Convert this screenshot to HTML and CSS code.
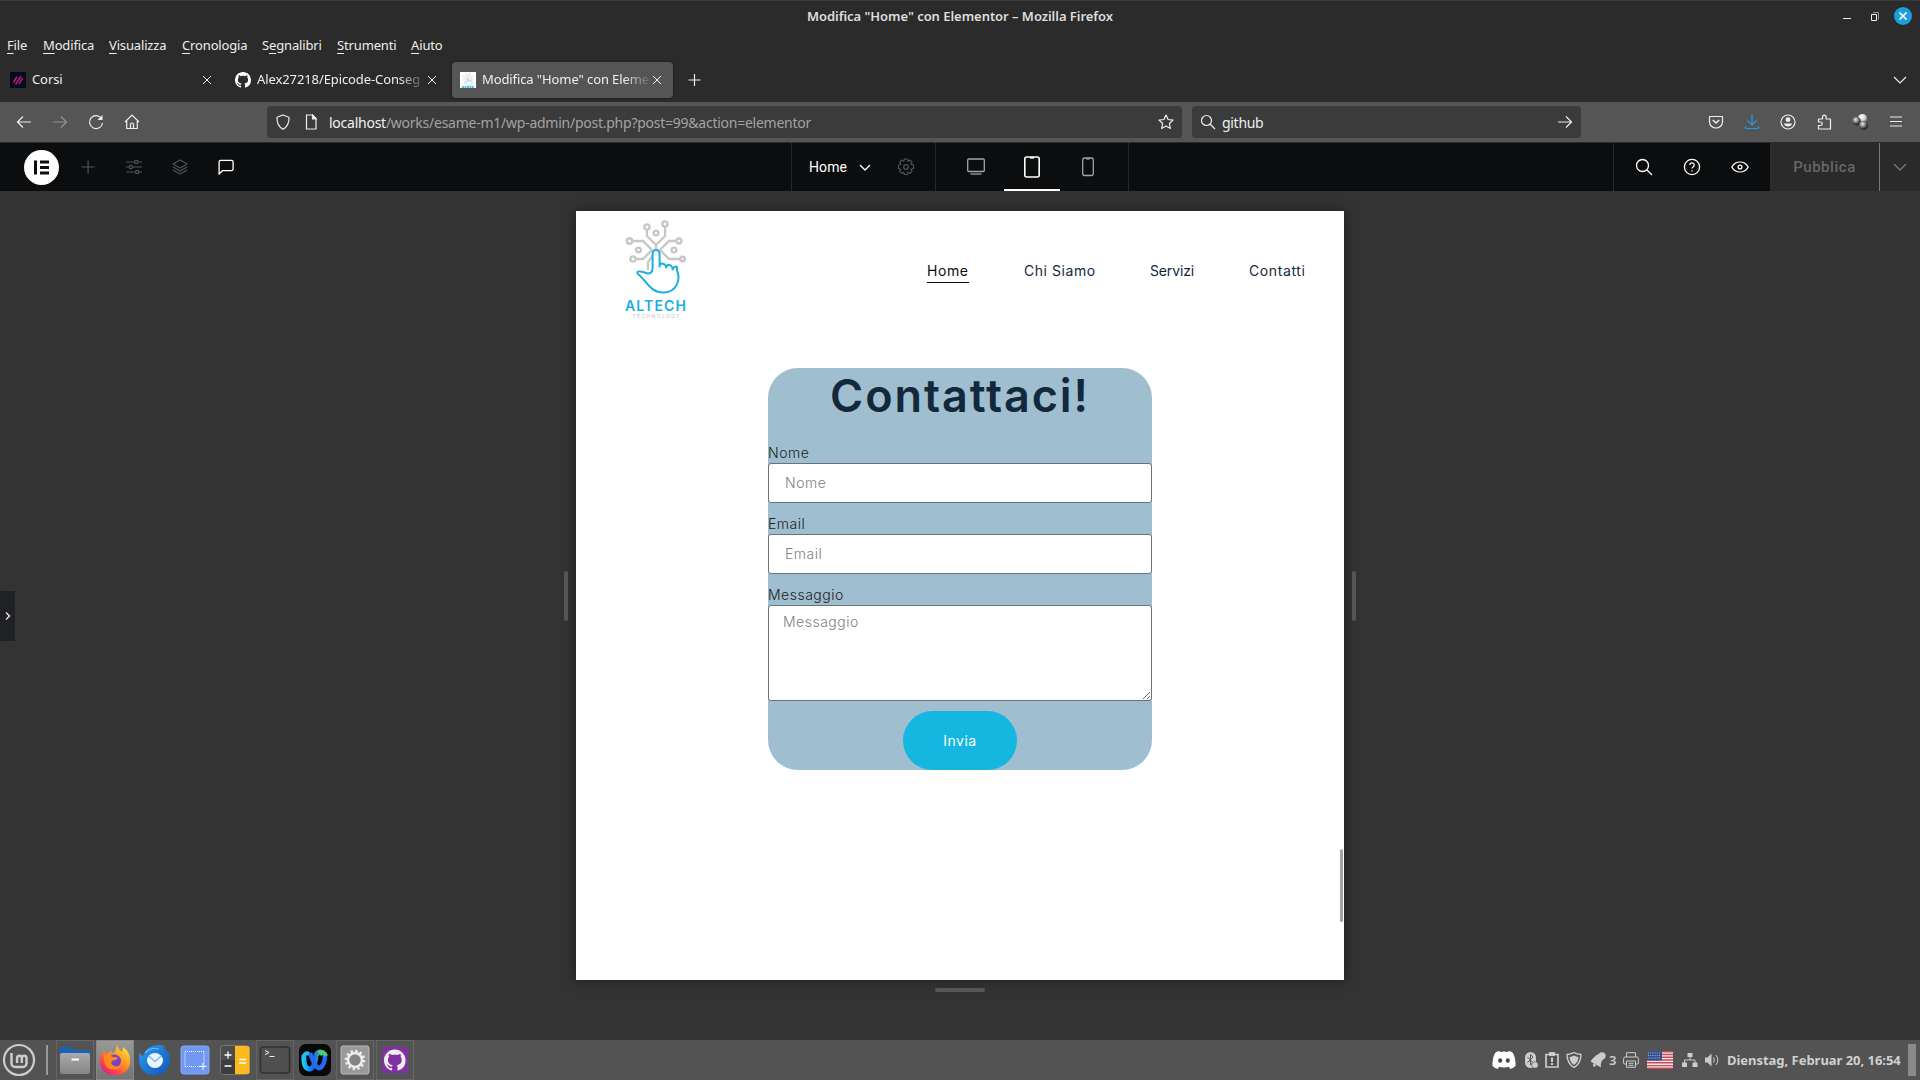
FILE: index.html
```html
<!DOCTYPE html>
<html lang="it">
<head>
<meta charset="utf-8">
<title>Modifica "Home" con Elementor</title>
<link rel="stylesheet" href="styles.css">
</head>
<body>
<svg class="defs" width="0" height="0">
  <defs>
    <linearGradient id="gFolder" x1="0" y1="0" x2="0" y2="1"><stop offset="0" stop-color="#aaa"/><stop offset="1" stop-color="#858585"/></linearGradient>
    <linearGradient id="gFox" x1="1" y1="0" x2="0.2" y2="1"><stop offset="0" stop-color="#fff04a"/><stop offset="0.45" stop-color="#ff9a1f"/><stop offset="0.8" stop-color="#ff3d4b"/><stop offset="1" stop-color="#e3159a"/></linearGradient>
    <linearGradient id="gBird" x1="0" y1="0" x2="1" y2="1"><stop offset="0" stop-color="#2a9df5"/><stop offset="1" stop-color="#1354b8"/></linearGradient>
    <linearGradient id="gWebex" x1="0" y1="0" x2="1" y2="0"><stop offset="0" stop-color="#16c8f4"/><stop offset="0.5" stop-color="#2458f0"/><stop offset="1" stop-color="#4fd866"/></linearGradient>
    <radialGradient id="gBall" cx="0.4" cy="0.35" r="0.7"><stop offset="0" stop-color="#eee"/><stop offset="0.4" stop-color="#888"/><stop offset="1" stop-color="#000"/></radialGradient>
    <radialGradient id="gBallLight" cx="0.4" cy="0.35" r="0.7"><stop offset="0" stop-color="#fff"/><stop offset="0.6" stop-color="#ccc"/><stop offset="1" stop-color="#555"/></radialGradient>
    <path id="cat" d="M8 0C3.58 0 0 3.58 0 8c0 3.54 2.29 6.53 5.47 7.59.4.07.55-.17.55-.38 0-.19-.01-.82-.01-1.49-2.01.37-2.53-.49-2.69-.94-.09-.23-.48-.94-.82-1.13-.28-.15-.68-.52-.01-.53.63-.01 1.08.58 1.23.82.72 1.21 1.87.87 2.33.66.07-.52.28-.87.51-1.07-1.78-.2-3.64-.89-3.64-3.95 0-.87.31-1.59.82-2.15-.08-.2-.36-1.02.08-2.12 0 0 .67-.21 2.2.82.64-.18 1.32-.27 2-.27s1.36.09 2 .27c1.53-1.04 2.2-.82 2.2-.82.44 1.1.16 1.92.08 2.12.51.56.82 1.27.82 2.15 0 3.07-1.87 3.75-3.65 3.95.29.25.54.73.54 1.48 0 1.07-.01 1.93-.01 2.2 0 .21.15.46.55.38A8.01 8.01 0 0 0 16 8c0-4.42-3.58-8-8-8z"/>
    <g id="tech">
      <g fill="none" stroke="#c6c8c8" stroke-width="2.300">
        <path d="M31 29V25L22 16V8M31 25L40 16V5M27 30L18 21H7M27 30L18 39H11M35 30L44 21H52M35 30L44 39H55M28 35L23 42V50"/>
      </g>
      <g fill="#fff" stroke="#c6c8c8" stroke-width="2.400">
        <circle cx="22" cy="7" r="2.600"/><circle cx="40" cy="4" r="2.600"/><circle cx="31" cy="13" r="2.400"/><circle cx="4.500" cy="21" r="2.700"/><circle cx="54" cy="21" r="2.500"/><circle cx="13.500" cy="30" r="2.400"/><circle cx="49" cy="30" r="2.400"/><circle cx="8" cy="39" r="2.600"/><circle cx="57.500" cy="39" r="2.300"/>
      </g>
      <path d="M27.600 49V34Q27.600 30 31 30T34.600 34V46.500Q35 42.500 38.500 44T41 47.500Q43 43.500 45.500 45.500T47.500 49.500Q49.500 45.500 52 47V50.500C56 60 51.500 72 39 72.500C25 73 22 61 13 54C10 49.500 19 51.800 22.500 53.500Q26.500 54 27.600 49" fill="#fff" stroke="#18b0dc" stroke-width="2" stroke-linejoin="round"/>
    </g>
  </defs>
</svg>

<header class="chrome">
  <div class="titlebar">
    <span class="title">Modifica "Home" con Elementor – Mozilla Firefox</span>
    <div class="wm">
      <svg width="28" height="20" viewBox="0 0 28 20"><path d="M10 12h8v1h-8z" fill="#eee"/></svg>
      <svg width="28" height="20" viewBox="0 0 28 20"><path d="M10.500 8.500h5v6h-5z" fill="none" stroke="#eee"/><path d="M12 6.500h5.500v7" fill="none" stroke="#999"/></svg>
      <svg width="28" height="20" viewBox="0 0 28 20"><circle cx="14" cy="10" r="9" fill="#1f9ede"/><path d="M10.500 6.500l7 7m0-7l-7 7" stroke="#fff" stroke-width="1.600"/></svg>
    </div>
  </div>
  <nav class="menubar">
    <span class="m1"><u>F</u>ile</span><span class="m2"><u>M</u>odifica</span><span class="m3"><u>V</u>isualizza</span><span class="m4"><u>C</u>ronologia</span><span class="m5">S<u>e</u>gnalibri</span><span class="m6"><u>S</u>trumenti</span><span class="m7"><u>A</u>iuto</span>
  </nav>
  <div class="tabs">
    <div class="tab">
      <svg width="16" height="16" viewBox="0 0 16 16"><path d="M0 0h16v16H0z" fill="#050a20"/><path d="M3.500 10.500L7 4.500M5.500 12.500L11 4M9 12l3.500-6" stroke="#b81b78" stroke-width="1.500"/></svg>
      <span class="label">Corsi</span>
      <svg class="x" width="16" height="16" viewBox="0 0 16 16"><path d="M4 4l8 8m0-8l-8 8"/></svg>
    </div>
    <div class="tab">
      <svg width="16" height="16" viewBox="0 0 16 16"><use href="#cat" fill="#fff"/></svg>
      <span class="label fade">Alex27218/Epicode-Conseg</span>
      <svg class="x" width="16" height="16" viewBox="0 0 16 16"><path d="M4 4l8 8m0-8l-8 8"/></svg>
    </div>
    <div class="tab active">
      <svg width="16" height="16" viewBox="0 0 16 16"><path d="M0 0h16v16H0z" fill="#fff"/><use href="#tech" transform="translate(2 .8) scale(.19 .175)"/><path d="M2 15h12" stroke="#18b0dc" stroke-width="1.300" stroke-dasharray="2 .5"/></svg>
      <span class="label fade">Modifica "Home" con Eleme</span>
      <svg class="x" width="16" height="16" viewBox="0 0 16 16"><path d="M4 4l8 8m0-8l-8 8"/></svg>
    </div>
    <svg class="newtab ln" width="42" height="20" viewBox="0 0 42 20"><path d="M15.500 10h12M21.500 4v12"/></svg>
    <svg class="alltabs ln" width="40" height="20" viewBox="0 0 40 20"><path d="M14 7l6 6 6-6"/></svg>
  </div>
  <div class="navbar">
    <div class="group left">
      <svg class="ln" viewBox="0 0 16 16"><path d="M15 8H1.500M7 2.500L1.500 8 7 13.500"/></svg>
      <svg class="ln dim" viewBox="0 0 16 16"><path d="M1 8h13.500M9 2.500L14.500 8 9 13.500"/></svg>
      <svg class="ln" viewBox="0 0 16 16"><path d="M13.500 4.500A6.500 6.500 0 1 0 14.500 9"/><path d="M14.500 1v5h-5z" fill="#eee" stroke="none"/></svg>
      <svg class="ln" viewBox="0 0 16 16"><path d="M1 8l7-7 7 7M2.700 7v7.500h10.600V7M6.500 14V10.500a1.500 1.500 0 0 1 3 0V14"/></svg>
    </div>
    <div class="field url">
      <svg class="ln" viewBox="0 0 16 16"><path d="M8 1l6 2.300c.3 5.700-1.500 9.500-6 11.900C3.500 12.800 1.700 9 2 3.300z"/></svg>
      <svg class="ln doc" viewBox="0 0 16 16"><path d="M3.500 1h6L13 4.500V15H3.500z"/><path d="M9.500 1v4H13z" fill="#eee"/></svg>
      <span class="addr"><b>localhost</b>/works/esame-m1/wp-admin/post.php?post=99&amp;action=elementor</span>
      <svg class="ln star" viewBox="0 0 16 16"><path d="M8 1l2.100 4.500 4.900.6-3.600 3.400.9 5L8 12.100 3.700 14.500l.9-5L1 6.100l4.900-.6z" stroke-linejoin="round"/></svg>
    </div>
    <div class="field search">
      <svg class="ln" viewBox="0 0 16 16"><circle cx="6.500" cy="6.500" r="5"/><path d="M10 10l5 5"/></svg>
      <span class="q">github</span>
      <svg class="ln" viewBox="0 0 16 16"><path d="M1 8h13.500M9 2.500L14.500 8 9 13.500"/></svg>
    </div>
    <div class="group right">
      <svg class="ln" viewBox="0 0 16 16"><path d="M1.500 2.500h13V8a6.500 6 0 0 1-13 0z" stroke-linejoin="round"/><path d="M4.800 6L8 9l3.200-3" stroke-width="1.600"/></svg>
      <svg class="ln blue" viewBox="0 0 16 16"><path d="M8 0v11M3.500 6.500L8 11l4.500-4.500M1.500 12v2.500h13V12"/></svg>
      <svg class="ln" viewBox="0 0 16 16"><circle cx="8" cy="8" r="7"/><circle cx="8" cy="5.700" r="2.400" fill="#eee" stroke="none"/><path d="M3.800 9.500h8.400a4.500 4.500 0 0 1-8.400 0z" fill="#eee" stroke="none"/></svg>
      <svg class="ln" viewBox="0 0 16 16"><path d="M2.500 15v-3.500h2a1.700 1.700 0 0 0 0-3.500h-2V5h4V3a1.800 1.800 0 0 1 3.600 0v2h4.400v10z" stroke-linejoin="round"/></svg>
      <svg viewBox="0 0 16 16"><circle cx="10.500" cy="4.500" r="4.700" fill="url(#gBallLight)"/><circle cx="4.500" cy="7" r="4.300" fill="url(#gBall)"/><circle cx="11.500" cy="11.300" r="4.500" fill="url(#gBall)"/></svg>
      <svg class="ln" viewBox="0 0 16 16"><path d="M2 3h12M2 7.500h12M2 12h12"/></svg>
    </div>
  </div>
</header>

<div class="editor">
  <div class="e-left">
    <svg width="35" height="35" viewBox="0 0 35 35"><circle cx="17.500" cy="17.500" r="17.500" fill="#fff"/><path d="M10 10.500h3v14h-3zM16 10.500h9v3h-9zM16 16h9v3h-9zM16 21.500h9v3h-9z" fill="#0c0d0e"/></svg>
    <div class="tools">
      <svg class="mut" viewBox="0 0 16 16"><path d="M8 1.500v13M1.500 8h13"/></svg>
      <svg class="mut" viewBox="0 0 16 16"><path d="M0 3h8.500M12 3h4M0 8h3M6.500 8H16M0 13h9.500M13 13h3"/><circle cx="10.200" cy="3" r="1.700"/><circle cx="4.700" cy="8" r="1.700"/><circle cx="11.200" cy="13" r="1.700"/></svg>
      <svg class="mut" viewBox="0 0 16 16"><path d="M8 1l7 4-7 4-7-4zM1 8l7 4 7-4M1 11l7 4 7-4" stroke-linejoin="round"/></svg>
      <svg class="wht" viewBox="0 0 16 16"><path d="M1 15V3a1.700 1.700 0 0 1 1.700-1.700h10.600A1.700 1.700 0 0 1 15 3v7a1.700 1.700 0 0 1-1.700 1.700H4.300z" stroke-linejoin="round"/></svg>
    </div>
  </div>
  <div class="e-doc">
    <span class="docname">Home</span>
    <svg class="wht" width="12" height="12" viewBox="0 0 12 12"><path d="M1 4l5 5 5-5"/></svg>
    <svg class="mut gear" width="18" height="18" viewBox="0 0 18 18"><circle cx="9" cy="9" r="2.300"/><path d="M7.500 1h3l.6 2.200 1.900-1 2 2-1 2L16.500 7v3.500l-2.500.8 1 2-2 2-2-1-.7 2.200h-3l-.6-2.200-2 1-2-2 1-2-2.200-.8V7l2.200-.8-1-2 2-2 2 1z" stroke-linejoin="round"/></svg>
  </div>
  <div class="e-dev">
    <div class="dev"><svg class="gry" width="20" height="20" viewBox="0 0 20 20"><rect x="1.700" y="2" width="16.600" height="12.500" rx="1"/><path d="M4.500 17h11"/></svg></div>
    <div class="dev on"><svg class="wht2" width="20" height="22" viewBox="0 0 20 22"><rect x="2.800" y="1" width="14.400" height="20" rx="2"/><path d="M8 1.800h4"/></svg></div>
    <div class="dev"><svg class="gry" width="16" height="20" viewBox="0 0 16 20"><rect x="2.700" y="1" width="10.600" height="17.500" rx="1.700"/><path d="M6.500 2h3"/></svg></div>
  </div>
  <div class="e-right">
    <svg class="wht" viewBox="0 0 18 18"><circle cx="7.500" cy="7.500" r="6"/><path d="M12 12l5 5"/></svg>
    <svg class="wht" viewBox="0 0 18 18"><circle cx="9" cy="9" r="7.600"/><path d="M6.800 7a2.200 2.200 0 1 1 3.300 2C9.200 9.500 9 9.800 9 10.500M9 12.300v1.300"/></svg>
    <svg class="wht" viewBox="0 0 18 18"><path d="M.8 9C4.500 .8 13.500 .8 17.200 9 13.500 17.200 4.500 17.200.8 9z" transform="translate(0 1.600) scale(1 .82)"/><circle cx="9" cy="9" r="1.900"/></svg>
  </div>
  <div class="publish">Pubblica</div>
  <div class="pubmore"><svg width="14" height="14" viewBox="0 0 14 14"><path d="M1 4l6 6 6-6"/></svg></div>
</div>

<main class="canvas">
  <div class="toggle"><svg width="8" height="10" viewBox="0 0 8 10"><path d="M2 1.500L5.500 5 2 8.500" fill="none" stroke="#ddd" stroke-width="1.500"/></svg></div>
  <i class="handle v"></i>
  <div class="middle">
    <section class="preview">
      <div class="site-head">
        <svg class="logo" width="64" height="104" viewBox="0 0 64 104">
          <use href="#tech"/>
          <text x="0" y="90.500" class="l1" textLength="61">ALTECH</text>
          <text x="7.500" y="98.300" class="l2" textLength="47">TECHNOLOGY</text>
        </svg>
        <nav class="site-nav"><a class="on n1">Home</a><a class="n2">Chi Siamo</a><a class="n3">Servizi</a><a class="n4">Contatti</a></nav>
      </div>
      <form class="form">
        <h2>Contattaci!</h2>
        <label>Nome</label>
        <input type="text" placeholder="Nome">
        <label>Email</label>
        <input type="text" placeholder="Email">
        <label>Messaggio</label>
        <textarea placeholder="Messaggio"></textarea>
        <button type="button">Invia</button>
      </form>
      <i class="thumb"></i>
    </section>
    <i class="handle h"></i>
  </div>
  <i class="handle v"></i>
</main>

<footer class="taskbar">
  <svg class="mint" width="38" height="40" viewBox="0 0 38 40"><circle cx="19" cy="20" r="15" fill="none" stroke="#ccc" stroke-width="2.200"/><path d="M11.500 13v10.500a3.500 3.500 0 0 0 3.500 3.500h8a3.500 3.500 0 0 0 3.500-3.500v-5.500a2.200 2.200 0 0 0-4.700 0v5M21.800 18a2.300 2.300 0 0 0-4.700 0v5" fill="none" stroke="#ccc" stroke-width="2.500"/></svg>
  <i class="sep"></i>
  <div class="apps">
    <div class="app open"><svg viewBox="0 0 32 32"><path d="M1 5q0-2 2-2h8l3 3h15q2 0 2 2v6H1z" fill="#1665b8"/><rect x="1" y="9" width="30" height="21" rx="2" fill="url(#gFolder)"/><path d="M12.500 14.500h7.500v2h-7.500z" fill="#fff"/></svg></div>
    <div class="app open hot"><svg viewBox="0 0 32 32"><path d="M18 1q1 4 5 7q1-3 1-5q8 5 7 16Q29 31 16 31T1 18Q1 11 5 6q.5 3 3 4 2-3 5-3-1 2 0 3 4-2 5-9z" fill="url(#gFox)"/><circle cx="15.500" cy="17" r="6.500" fill="#7542c9"/><path d="M5 11q5-1 9 2l5 .5q-1 3-5 3-3 2-1 4 5 4 9 0 0 4-5 5-10 1-12-8z" fill="#ff8a1c"/></svg></div>
    <div class="app"><svg viewBox="0 0 32 32"><path d="M1 7q0 4 3 5Q8 0 22 1l5 2-3 1q8 4 7 14Q28 31 15 31T0 17q0-6 1-10z" fill="url(#gBird)"/><ellipse cx="16" cy="16.500" rx="8" ry="7.500" fill="#e8f4ff"/><path d="M10 12l6 5.500 6-5.500" fill="none" stroke="#87b8e8" stroke-width="1.300"/><path d="M6 9Q11 3 20 5" fill="none" stroke="#6cc4ff" stroke-width="1.200"/></svg></div>
    <div class="app"><svg viewBox="0 0 32 32"><rect x="2" y="2" width="28" height="28" rx="2.500" fill="#7199f3" stroke="#86a9fa"/><path d="M6 7.500h19v15H6z" fill="none" stroke="#fff" stroke-dasharray="1 1"/><path d="M24 19v7M20.500 22.500h7" stroke="#fff"/></svg></div>
    <div class="app"><svg viewBox="0 0 32 32"><rect x="1.500" y="1.500" width="29" height="29" rx="3" fill="#4d4d4d" stroke="#777"/><path d="M2 16h14v14H4q-2 0-2-2z" fill="#3d3d3d"/><path d="M16 2h12q2.500 0 2.500 2.500v23Q30.500 30 28 30H16z" fill="#ffb91f"/><path d="M5.500 11h7M9 7.500v7M5.500 22h7M20 15.500h7M20 19h7" stroke="#fff" stroke-width="1.300"/></svg></div>
    <div class="app open"><svg viewBox="0 0 32 32"><rect x="1.500" y="3" width="29" height="26" rx="3" fill="#505050" stroke="#303030" stroke-width="1.500"/><path d="M6 6.500l4 2-4 2M10.500 12.500h5" fill="none" stroke="#eee"/></svg></div>
    <div class="app"><svg viewBox="0 0 32 32"><rect width="32" height="32" rx="7" fill="#080808"/><path d="M5 11q-1 14 6 14 5-1 6-14 4-6 7 0" fill="none" stroke="url(#gWebex)" stroke-width="5"/><path d="M11 9q6 17 10 15 5-3 5-13" fill="none" stroke="#246af4" stroke-width="4.500"/><path d="M5 12q1-4 5-2" fill="none" stroke="#20c4e0" stroke-width="4"/><path d="M20 9q5-3 7 3" fill="none" stroke="#48d070" stroke-width="4"/></svg></div>
    <div class="app open"><svg viewBox="0 0 32 32"><rect x="2" y="2" width="28" height="28" rx="2" fill="#999" stroke="#bbb"/><circle cx="16" cy="16" r="9" fill="none" stroke="#eee" stroke-width="2.500" stroke-dasharray="2.350 2.350"/><circle cx="16" cy="16" r="7" fill="#858585" stroke="#eee" stroke-width="2.500"/></svg></div>
    <div class="app open"><svg viewBox="0 0 32 32"><rect x="3" y="3" width="26" height="26" rx="4" fill="#8030a0"/><use href="#cat" fill="#eee" transform="translate(5 5.500) scale(1.350)"/></svg></div>
  </div>
  <div class="tray">
    <svg class="i-dis" width="24" height="18" viewBox="0 0 24 18"><path d="M8 1q4-1 8 0l.5-1Q20 .5 21 2q3 6 2.500 13-3 3-5.500 2.700l-1-2q-5 1.500-10 0l-1 2Q3.500 18 .5 15 0 8 3 2 4 .5 7.500 0z" fill="#fff"/><ellipse cx="8.200" cy="9.500" rx="2" ry="2.300" fill="#444"/><ellipse cx="15.800" cy="9.500" rx="2" ry="2.300" fill="#444"/></svg>
    <svg class="i-bt" width="14" height="16" viewBox="0 0 14 16"><rect x="1" width="11" height="16" rx="5.500" fill="#ccc"/><path d="M3.500 5l5.500 5.500L6.500 13V2.500L9 5l-5.500 5.500" fill="none" stroke="#555"/><circle cx="11" cy="13" r="3.300" fill="#ccc" stroke="#555" stroke-width=".6"/></svg>
    <svg class="i-cl" width="16" height="16" viewBox="0 0 16 16"><path d="M2 2.500h12v12.500H2z" fill="none" stroke="#ccc" stroke-width="1.700"/><path d="M5 0h6v4H5zM7 5.500h2v4.500H7zM7 11h2v2H7z" fill="#ccc"/></svg>
    <svg class="i-sh" width="16" height="16" viewBox="0 0 16 16"><path d="M8 .5q3 2 7 2-.2 9-7 13-6.800-4-7-13 4 0 7-2z" fill="none" stroke="#ccc" stroke-width="1.400"/><path d="M8 3.500q2 1.300 4.500 1.500-.5 5.500-4.500 8-4-2.500-4.500-8Q6 4.800 8 3.500z" fill="#ccc"/></svg>
    <svg class="i-be" width="16" height="16" viewBox="0 0 16 16"><path d="M.5 9.500Q5 3 9 2l4.500 5Q10 10 11 15.500z" fill="#ccc"/><circle cx="12" cy="3.800" r="3.600" fill="#ccc"/><path d="M3 11.500l3.500 1.500-2 2q-2-1-1.500-3.500z" fill="#ccc"/></svg>
    <span class="cnt">3</span>
    <svg class="i-pr" width="16" height="16" viewBox="0 0 16 16"><path d="M3.500 5V.7h9V5M3.500 12H1.700Q.6 12 .6 11V6.500Q.6 5 2 5h12q1.400 0 1.400 1.500V11q0 1-1.100 1h-1.800M3.500 9h9v6.300h-9zM5.500 11.300h5M5.500 13.300h5" fill="none" stroke="#ccc"/></svg>
    <svg class="i-fl" width="26" height="18" viewBox="0 0 26 18"><path d="M0 0h26v18H0z" fill="#eee"/><path d="M0 .7h26M0 3.500h26M0 6.200h26M0 9h26M0 11.800h26M0 14.600h26M0 17.300h26" stroke="#cc4653" stroke-width="1.400"/><path d="M0 0h15v9.500H0z" fill="#38508a"/><path d="M1 2h13M1 4.500h13M1 7h13" stroke="#a9b4d0" stroke-dasharray="1 1.200"/></svg>
    <svg class="i-ne" width="16" height="14" viewBox="0 0 16 14"><path d="M5.500 0h5v4h-5zM0 9.500h5V14H0zM10.500 9.500h5V14h-5z" fill="#ccc"/><path d="M8 4v3M2.500 10V7h10.500v3" fill="none" stroke="#ccc"/></svg>
    <svg class="i-so" width="15" height="14" viewBox="0 0 15 14"><path d="M0 4.500h2.500L6.500.5v13l-4-4H0z" fill="#ccc"/><path d="M8.500 4.500q1.700 2.500 0 5M11 2q3.500 5 0 10" fill="none" stroke="#ccc"/></svg>
    <span class="clock">Dienstag, Februar 20, 16:54</span>
    <i class="desk"></i>
  </div>
</footer>
</body>
</html>
```
FILE: styles.css
```css
* { box-sizing: border-box; }
body { margin: 0; width: 1920px; height: 1080px; overflow: hidden; display: flex; flex-direction: column; background: #333; font-family: "Noto Sans", sans-serif; font-size: 13px; color: #eee; }
svg, span { flex: none; display: block; }
.defs { position: absolute; }
.ln { fill: none; stroke: #eee; stroke-width: 1.2; }

/* Browser window */
.chrome { height: 143px; background: #2b2b2b; border-top: 1px solid #3c3c3c; border-bottom: 1px solid #2b2b2b; display: flex; flex-direction: column; }
.titlebar { height: 30px; display: grid; grid-template-columns: 1fr auto 1fr; align-items: center; }
.title { grid-column: 2; font-weight: 600; color: #dedede; letter-spacing: -.04px; }
.wm { display: flex; justify-content: flex-end; padding-right: 3px; }
.menubar { height: 28px; display: flex; align-items: center; padding-left: 7px; }
.menubar u { text-underline-offset: 3px; }
.menubar span { letter-spacing: -.15px; }
.m1 { width: 36px; } .m2 { width: 66px; } .m3 { width: 73px; } .m4 { width: 80px; } .m5 { width: 75px; } .m6 { width: 74px; }
.tabs { height: 43px; display: flex; align-items: center; gap: 4px; padding: 0 0 2px 2px; }
.tab { width: 221px; height: 36px; display: flex; align-items: center; padding: 0 8px; border-radius: 4px; }
.tab.active { background: #555; box-shadow: 0 0 3px rgba(0,0,0,.5); }
.label { flex: 1; margin-left: 6px; padding-bottom: 1px; white-space: nowrap; letter-spacing: -.1px; }
.fade { -webkit-mask-image: linear-gradient(to right, #000 85%, rgba(0,0,0,.1) 100%); mask-image: linear-gradient(to right, #000 85%, rgba(0,0,0,.1) 100%); }
.x { fill: none; stroke: #eee; }
.newtab { margin-left: -4px; }
.alltabs { margin-left: auto; }
.navbar { height: 40px; background: #555; display: flex; align-items: center; }
.group { display: flex; }
.group svg { width: 36px; height: 16px; }
.left { padding-left: 6px; width: 267px; }
.right { margin-left: auto; padding-right: 6px; }
.dim { opacity: .4; }
.blue { stroke: #1f9ede; }
.field { height: 32px; background: #3b3b3b; border-radius: 4px; display: flex; align-items: center; }
.field svg { width: 16px; height: 16px; }
.url { width: 915px; padding: 0 8px; }
.doc { margin-left: 12px; }
.addr { flex: 1; margin-left: 10px; color: #a3a3a3; font-size: 14px; letter-spacing: -.25px; }
.addr b { font-weight: 400; color: #f2f2f2; }
.search { width: 389px; margin-left: 10px; padding: 0 8px; }
.q { flex: 1; margin-left: 6px; font-size: 14px; letter-spacing: -.3px; }

/* Elementor top bar */
.editor { height: 48px; background: #0c0d0e; display: flex; font-family: Roboto, sans-serif; }
.editor svg { fill: none; }
.e-left { width: 791px; display: flex; align-items: center; padding-left: 24px; }
.tools { display: flex; margin-left: 5.5px; }
.tools svg { width: 46.2px; height: 16px; }
.mut { stroke: #515356; stroke-width: 1.2; }
.wht { stroke: #fff; stroke-width: 1.3; }
.wht2 { stroke: #fff; stroke-width: 1.6; }
.gry { stroke: #9da5ae; stroke-width: 1.3; }
.e-doc { width: 144px; border-left: 1px solid #26282b; display: flex; align-items: center; padding-left: 17px; }
.docname { width: 50px; font-size: 14px; color: #fff; padding-bottom: 1px; letter-spacing: .1px; }
.gear { margin-left: 26px; }
.e-dev { width: 194px; border: 1px solid #26282b; border-width: 0 1px; display: flex; padding-left: 12px; }
.dev { width: 56px; display: flex; align-items: center; justify-content: center; border-bottom: 2px solid transparent; padding-top: 2px; }
.dev.on { border-color: #fff; }
.e-right { margin-left: auto; width: 157px; border-left: 1px solid #26282b; display: flex; align-items: center; padding-left: 6px; }
.e-right svg { width: 48px; height: 18px; }
.publish { width: 109px; background: #2a2a2a; color: #676767; font-size: 15px; font-weight: 500; letter-spacing: .55px; display: flex; align-items: center; justify-content: center; }
.pubmore { width: 41px; background: #2a2a2a; border-left: 1px solid #777; display: flex; align-items: center; justify-content: center; }
.pubmore svg { stroke: #777; stroke-width: 1.3; }

/* Canvas and responsive preview */
.canvas { height: 849px; display: flex; align-items: flex-start; }
.toggle { width: 15px; height: 50px; margin: 400px 549px 0 0; background: #202124; display: flex; align-items: center; justify-content: center; }
.handle { display: block; background: #595959; border-radius: 2px; }
.v { width: 4px; height: 50px; margin-top: 380px; }
.h { width: 50px; height: 4px; margin: 8px auto 0; }
.middle { margin: 20px 8px 0; }
.preview { position: relative; width: 768px; height: 769px; background: #fff; box-shadow: 0 0 12px rgba(0,0,0,.45); font-family: Inter, sans-serif; color: #222; }
.thumb { position: absolute; right: 1px; top: 638px; width: 3px; height: 73px; border-radius: 2px; background: #a3a3a6; }
.site-head { height: 157px; display: flex; }
.logo { margin: 9px 0 0 49px; }
.l1 { font: 600 14px Inter, sans-serif; fill: #18b0dc; }
.l2 { font: 400 5px Inter, sans-serif; fill: #c4c4c4; }
.site-nav { margin-left: 238px; padding-top: 50px; display: flex; font-size: 14px; color: #14283c; }
.site-nav a { height: 22px; line-height: 20px; white-space: nowrap; }
.site-nav .on { color: #0c0d0e; border-bottom: 1px solid #0c0d0e; }
.n1 { width: 42px; margin-right: 55px; letter-spacing: .6px; } .n2 { width: 126px; letter-spacing: .55px; } .n3 { width: 99px; letter-spacing: -.15px; } .n4 { letter-spacing: .6px; }
.form { width: 384px; height: 402px; margin: 0 auto; background: #9fbecf; border-radius: 30px; display: flex; flex-direction: column; font-size: 14px; font-weight: 300; }
.form h2 { margin: 0 0 19px; height: 55px; line-height: 55px; text-align: center; font-size: 45px; font-weight: 600; letter-spacing: 1.9px; color: #14283c; }
.form label { height: 21px; line-height: 21px; letter-spacing: .5px; }
.form input { height: 40px; margin: 0 0 10px; padding: 0 16px 2px; }
.form input, .form textarea { width: 384px; border: 1px solid #69727d; border-radius: 3px; background: #fff; font: 300 14px Inter, sans-serif; letter-spacing: .5px; outline: 0; }
.form textarea { height: 96px; margin: 0; padding: 7px 14px; resize: vertical; }
::placeholder { color: #808080; }
.form button { width: 114px; height: 59px; margin: 10px auto 0; border: 0; border-radius: 30px; background: #15b6df; color: #fff; font: 400 14px Inter, sans-serif; letter-spacing: .5px; }

/* Desktop panel */
.taskbar { height: 40px; background: #535353; display: flex; align-items: center; }
.sep { width: 2px; height: 30px; margin-left: 8px; background: #999; }
.apps { display: flex; gap: 2px; margin-left: 8px; }
.app { width: 38px; height: 40px; display: flex; align-items: center; justify-content: center; }
.app svg { width: 32px; height: 32px; }
.app.open { border: 1px solid #656565; }
.app.hot { background: linear-gradient(#999, #747474); border-color: #888; }
.tray { margin-left: auto; display: flex; align-items: center; height: 40px; padding-right: 4px; }
.i-dis { margin-right: 8px; } .i-bt { margin-right: 6px; } .i-cl { margin-right: 6px; } .i-sh { margin-right: 8px; } .i-be { margin-right: 3px; }
.cnt { width: 14px; font-weight: 600; color: #ccc; }
.i-pr { margin-right: 8px; } .i-fl { margin-right: 9px; } .i-ne { margin-right: 7px; } .i-so { margin-right: 7px; }
.clock { width: 181px; font-weight: 700; letter-spacing: -.03px; color: #d0d0d0; white-space: nowrap; }
.desk { width: 8px; height: 32px; background: #8a8a8a; }
```
